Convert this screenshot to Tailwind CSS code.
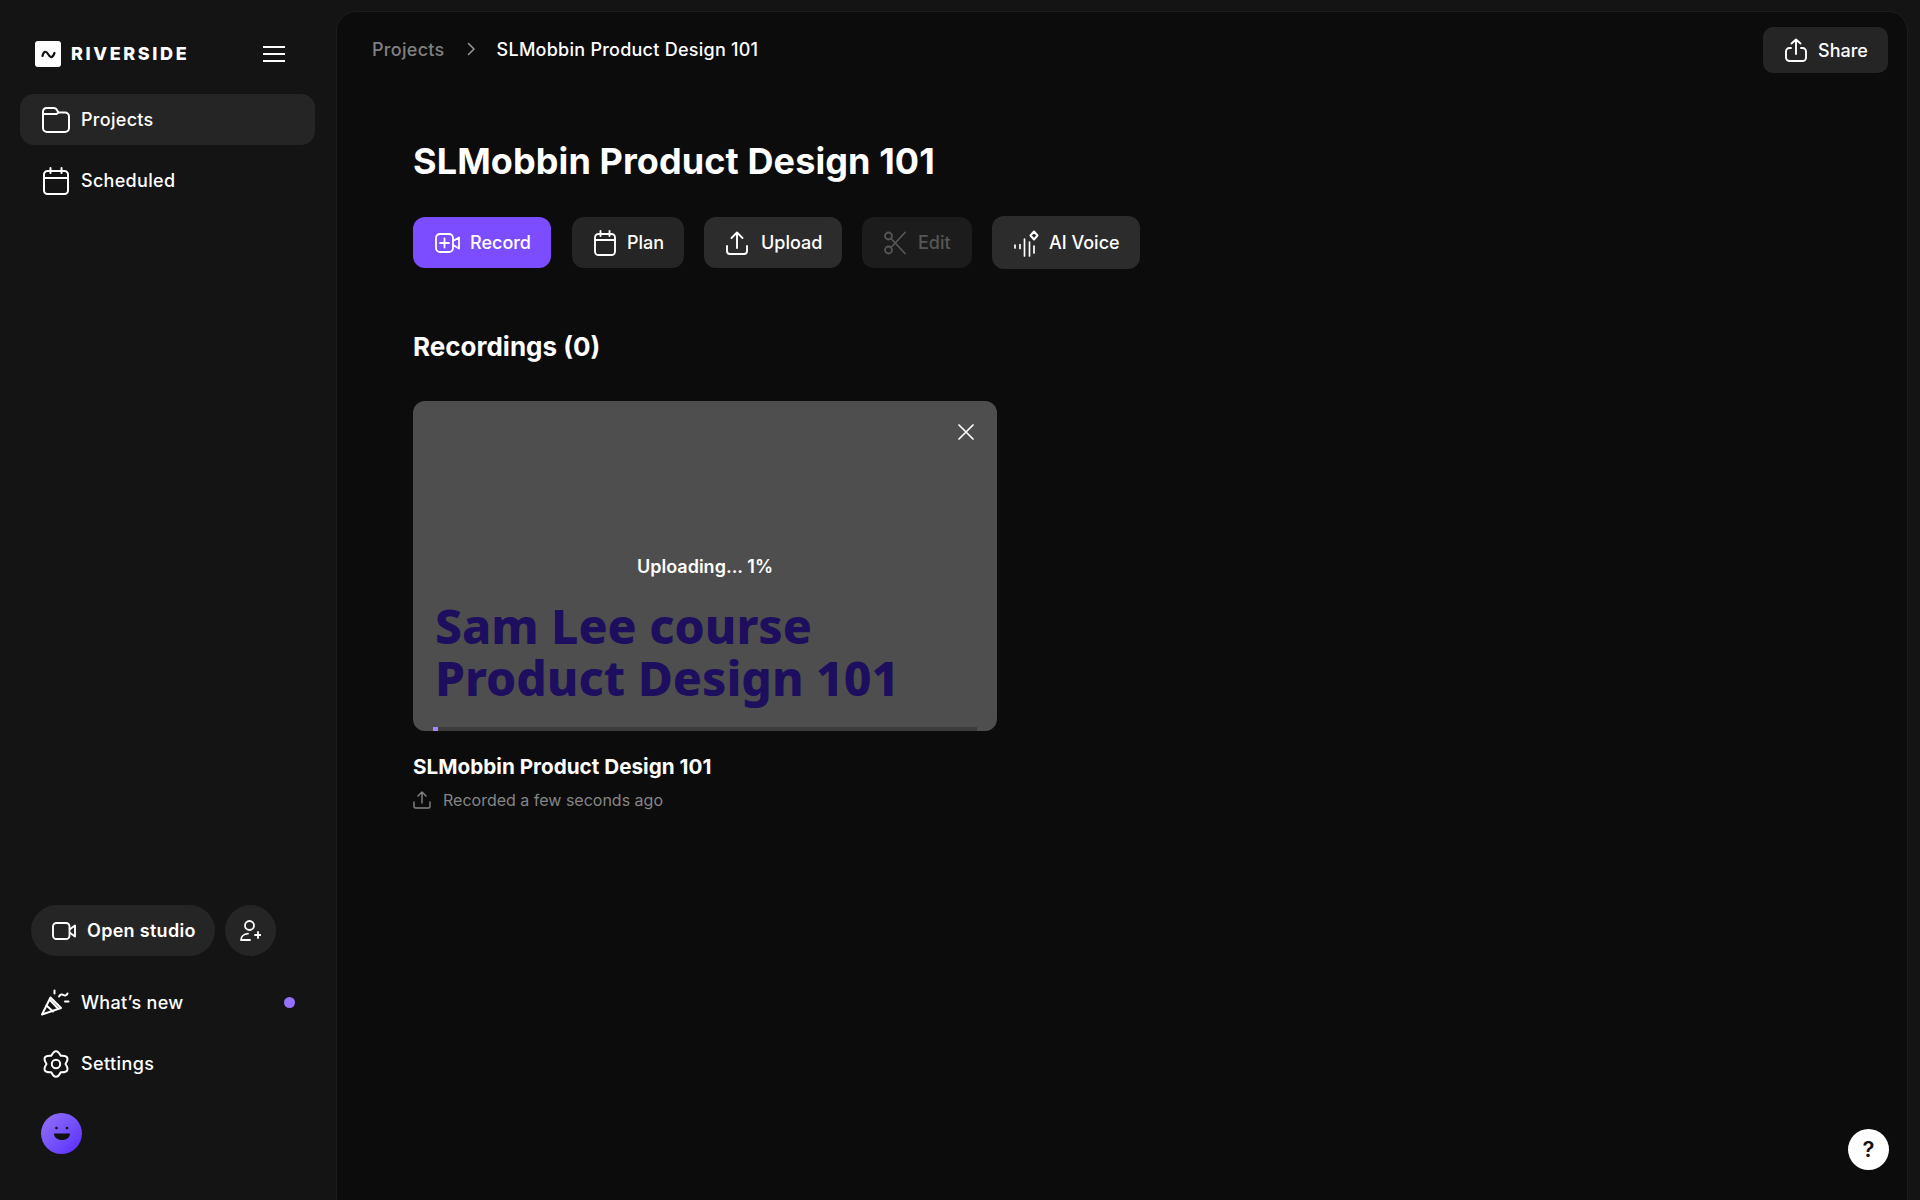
<!DOCTYPE html>
<html lang="en"><head><meta charset="utf-8"><title>Riverside</title>
<script src="https://cdn.jsdelivr.net/npm/@tailwindcss/browser@4"></script></head>
<body class="bg-[#141414]">
<div class="relative flex h-[1200px] w-[1920px] overflow-hidden bg-[#141414] font-['Inter',sans-serif] text-white">
  <aside class="flex w-[336px] shrink-0 flex-col pl-5 pr-[21px]">
    <div class="mt-[41px] flex h-[26px] items-center pl-[15px]">
      <div class="flex h-[26px] w-[26px] items-center justify-center rounded-[3px] bg-white">
        <svg width="15" height="11" viewBox="0 0 15 11" fill="none" stroke="#111" stroke-width="2.200" stroke-linecap="round"><path d="M1.500 7C2.800 2 5 1.500 7 5s4.200 5 6.500-1"/></svg>
      </div>
      <span class="ml-[10px] text-[18px] font-extrabold leading-none tracking-[2.6px]">RIVERSIDE</span>
      <svg class="ml-auto mr-[30px]" width="22" height="16" viewBox="0 0 22 16" stroke="#fff" stroke-width="2"><path d="M0 1h22M0 8h22M0 15h22"/></svg>
    </div>
    <nav class="mt-[27px] flex flex-col gap-[10px] text-[18px] font-medium tracking-[0.3px]">
      <a class="flex h-[51px] items-center gap-[11px] rounded-[14px] bg-[#252525] pl-[22px]">
        <svg width="28" height="26" viewBox="0 0 28 26" fill="none" stroke="#fff" stroke-width="2" stroke-linejoin="round" stroke-linecap="round"><path d="M1 4.500A3.500 3.500 0 0 1 4.500 1H12a3 3 0 0 1 2.400 1.200L16.500 5.500H23A4 4 0 0 1 27 9.500V21a4 4 0 0 1-4 4H5a4 4 0 0 1-4-4z"/><path d="M1 7h13.500l2-1.500"/></svg>
        <span>Projects</span>
      </a>
      <a class="flex h-[51px] items-center gap-[11px] pl-[22px]">
        <svg width="28" height="28" viewBox="0 0 28 28" fill="none" stroke="#fff" stroke-width="2" stroke-linecap="round"><rect x="2" y="4" width="24" height="23" rx="3.500"/><path d="M2 11h24M8.500 1v5M19.500 1v5"/></svg>
        <span>Scheduled</span>
      </a>
    </nav>
    <div class="mt-auto flex items-center gap-[10px] pl-[11px]">
      <a class="flex h-[51px] w-[184px] items-center gap-[11px] rounded-full bg-[#252525] pl-[21px] text-[18px] font-semibold tracking-[0.3px]">
        <svg width="24" height="18" viewBox="0 0 24 18" fill="none" stroke="#fff" stroke-width="1.900" stroke-linejoin="round"><rect x="1" y="1" width="16.500" height="16" rx="3.500"/><path d="M17.500 7.500 23 3.500v11l-5.500-4"/></svg>
        <span>Open studio</span>
      </a>
      <a class="flex h-[51px] w-[51px] items-center justify-center rounded-full bg-[#252525]">
        <svg width="21" height="21" viewBox="0 0 21 21" fill="none" stroke="#fff" stroke-width="1.800" stroke-linecap="round"><circle cx="9.500" cy="5.500" r="4.500"/><path d="M1 20c0-3.500 3-6 7-6.300M1 20h9M15 15h6M18 12v6"/></svg>
      </a>
    </div>
    <div class="mt-[21px] flex flex-col gap-[10px] text-[18px] font-medium tracking-[0.3px]">
      <a class="flex h-[51px] items-center pl-[21px]">
        <svg width="30" height="28" viewBox="0 0 30 28" fill="none" stroke="#fff" stroke-width="2" stroke-linecap="round" stroke-linejoin="round"><path d="M1 25.500 9.500 8.500l10.500 10.500z"/><path d="M5.500 16.500l6.500 6M9 11l8 8.500"/><path d="M13.500 1.500v3M18 7.500c1.500-2.500 3-2.500 4.500-1.500s3 .5 4-1.500M24 12.500h3.500"/></svg>
        <span class="ml-[10px]">What’s new</span>
        <span class="ml-auto mr-5 h-[11px] w-[11px] rounded-full bg-[#9571ff]"></span>
      </a>
      <a class="flex h-[51px] items-center gap-[11px] pl-[22px]">
        <svg width="28" height="28" viewBox="0 0 28 28" fill="none" stroke="#fff" stroke-width="2" stroke-linejoin="round"><path d="M9.250 5.770Q14 -3.500 18.750 5.770Q29.160 5.250 23.500 14Q29.160 22.750 18.750 22.230Q14 31.500 9.250 22.230Q-1.160 22.750 4.500 14Q-1.160 5.250 9.250 5.770z"/><circle cx="14" cy="14" r="4.200"/></svg>
        <span class="tracking-[0.4px]">Settings</span>
      </a>
    </div>
    <div class="mb-[46px] ml-[21px] mt-[24px] flex h-[41px] w-[41px] items-center justify-center rounded-full bg-gradient-to-br from-[#9670f5] to-[#5a1eff]">
      <svg width="18" height="15" viewBox="0 0 18 15" fill="#111"><circle cx="3.500" cy="2" r="1.300"/><circle cx="14" cy="2" r="1.300"/><path d="M1 7.500h16c0 4-3.500 6.500-8 6.500S1 11.500 1 7.500z"/></svg>
    </div>
  </aside>

  <main class="mb-[-20px] mr-3 mt-[11px] flex min-w-0 flex-1 flex-col rounded-t-[20px] border border-[#1c1c1c] bg-[#0c0c0c] pl-[76px]">
    <header class="-ml-[76px] mt-[15px] flex h-[46px] items-center pl-[35px] pr-[19px] text-[18px] font-medium">
      <span class="mb-[2px] tracking-[0.3px] text-[#808080]">Projects</span>
      <svg class="mb-[2px] ml-[22px]" width="9" height="14" viewBox="0 0 9 14" fill="none" stroke="#9a9a9a" stroke-width="1.500" stroke-linecap="round" stroke-linejoin="round"><path d="M1.500 1.500 7 7l-5.500 5.500"/></svg>
      <span class="mb-[2px] ml-[21px] tracking-[0.25px]">SLMobbin Product Design 101</span>
      <a class="ml-auto flex h-[46px] w-[125px] items-center gap-[11px] rounded-[10px] bg-[#252525] pl-[22px]">
        <svg width="22" height="24" viewBox="0 0 22 24" fill="none" stroke="#fff" stroke-width="1.900" stroke-linecap="round" stroke-linejoin="round"><path d="M6 10H4.500A3.500 3.500 0 0 0 1 13.500v6A3.500 3.500 0 0 0 4.500 23h13a3.500 3.500 0 0 0 3.500-3.500v-6A3.500 3.500 0 0 0 17.500 10H16M11 16V1.500M6.500 5.500 11 1.500l4.500 4"/></svg>
        <span>Share</span>
      </a>
    </header>
    <h1 class="mt-[66px] text-[36px] font-bold leading-[44px] tracking-[0.1px]">SLMobbin Product Design 101</h1>
    <div class="mt-[33px] flex items-center gap-5 text-[18px] font-medium">
      <a class="flex h-[51px] w-[138px] items-center gap-[10px] rounded-[12px] bg-[#7b4dff] pl-[22px]">
        <svg width="25" height="22" viewBox="0 0 25 22" fill="none" stroke="#fff" stroke-width="1.800" stroke-linecap="round" stroke-linejoin="round"><rect x="1" y="2" width="17" height="18" rx="4"/><path d="M9.500 6.500v9M5 11h9M18 9l6-3.500v11L18 13"/></svg>
        <span>Record</span>
      </a>
      <a class="ml-px flex h-[51px] w-[112px] items-center gap-[11px] rounded-[12px] bg-[#252525] pl-[22px]">
        <svg width="22" height="26" viewBox="0 0 22 26" fill="none" stroke="#fff" stroke-width="1.900" stroke-linecap="round"><rect x="1" y="4" width="20" height="21" rx="3.500"/><path d="M1 10h20M6.500 1v5M15.500 1v5"/></svg>
        <span>Plan</span>
      </a>
      <a class="flex h-[51px] w-[138px] items-center gap-[13px] rounded-[12px] bg-[#2c2c2c] pl-[22px]">
        <svg width="22" height="24" viewBox="0 0 22 24" fill="none" stroke="#fff" stroke-width="1.900" stroke-linecap="round" stroke-linejoin="round"><path d="M1 15v5a3 3 0 0 0 3 3h14a3 3 0 0 0 3-3v-5M11 17V1.500M5.500 7 11 1.500 16.500 7"/></svg>
        <span>Upload</span>
      </a>
      <a class="flex h-[51px] w-[110px] items-center gap-[12px] rounded-[12px] bg-[#1c1c1c] pl-[22px] text-[#565656]">
        <svg width="22" height="24" viewBox="0 0 22 24" fill="none" stroke="#565656" stroke-width="1.800" stroke-linecap="round"><circle cx="4.500" cy="5" r="3.500"/><circle cx="4.500" cy="19" r="3.500"/><path d="M7 7.500 21 22.500M7 16.500 21 1.500"/></svg>
        <span>Edit</span>
      </a>
      <a class="flex h-[53px] w-[148px] items-center gap-[10px] rounded-[12px] bg-[#2c2c2c] pl-[21px]">
        <svg width="26" height="28" viewBox="0 0 26 28" fill="none" stroke="#fff" stroke-width="1.700" stroke-linecap="round"><path d="M2 16v3M7 15.500v4M11.500 10v17M16.500 13v14M21 17v7"/><path d="M21 2.500 24.500 6.500 21 10.500 17.500 6.500z" stroke-width="2" stroke-linejoin="round"/></svg>
        <span>AI Voice</span>
      </a>
    </div>
    <h2 class="mt-[60px] text-[26px] font-bold leading-[36px]">Recordings (0)</h2>
    <section class="mt-[36px] w-[584px]">
      <div class="relative flex h-[330px] flex-col items-center overflow-hidden rounded-[12px] bg-[#4e4e4e]">
        <svg class="absolute right-[23px] top-[23px]" width="16" height="16" viewBox="0 0 16 16" stroke="#fff" stroke-width="1.700" stroke-linecap="round"><path d="M1 1l14 14M15 1 1 15"/></svg>
        <p class="mt-[155px] text-[18px] font-semibold leading-[22px]">Uploading... 1%</p>
        <p class="mt-[22px] w-full pl-[22px] font-['Noto_Sans',sans-serif] text-[48px] font-extrabold leading-[52px] text-[#1d0f5e]">Sam Lee course<br>Product Design 101</p>
        <div class="absolute bottom-0 left-5 h-[4px] w-[544px] bg-[#3c3c3c]"><div class="h-full w-[5px] bg-[#a585ff]"></div></div>
      </div>
      <h3 class="mt-[22px] text-[20.700px] font-bold leading-[28px]">SLMobbin Product Design 101</h3>
      <div class="mt-[7px] flex items-center gap-[12px] text-[16px] text-[#858585]">
        <svg width="18" height="18" viewBox="0 0 18 18" fill="none" stroke="#858585" stroke-width="1.400" stroke-linecap="round" stroke-linejoin="round"><path d="M1 11v4.500A1.500 1.500 0 0 0 2.500 17h13a1.500 1.500 0 0 0 1.500-1.500V11M9 12V1M5 5l4-4 4 4"/></svg>
        <span>Recorded a few seconds ago</span>
      </div>
    </section>
  </main>

  <a class="absolute bottom-[30px] right-[31px] flex h-[41px] w-[41px] items-center justify-center rounded-full bg-white text-[22px] font-semibold text-[#111]">?</a>
</div>
</body></html>
